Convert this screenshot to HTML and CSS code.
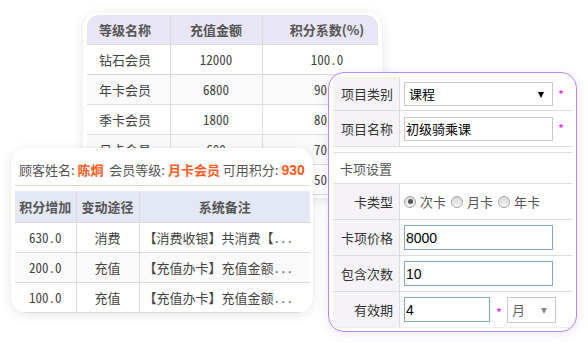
FILE: index.html
```html
<!DOCTYPE html>
<html lang="zh-CN">

<head>
  <meta charset="UTF-8">
  <meta name="viewport" content="width=device-width, initial-scale=1.0">
  <title>会员卡项</title>
  <link rel="stylesheet" href="styles.css">
</head>

<body>
  <div class="canvas">

    <!-- 会员等级 -->
    <div class="card card-levels">
      <div class="clip">
        <table class="grid levels">
          <colgroup>
            <col style="width: 83px">
            <col style="width: 92px">
            <col style="width: 130px">
          </colgroup>
          <thead>
            <tr>
              <th class="left">等级名称</th>
              <th>充值金额</th>
              <th>积分系数(%)</th>
            </tr>
          </thead>
          <tbody>
            <tr>
              <td class="left">钻石会员</td>
              <td>12000</td>
              <td>100.0</td>
            </tr>
            <tr>
              <td class="left">年卡会员</td>
              <td>6800</td>
              <td>90.0</td>
            </tr>
            <tr>
              <td class="left">季卡会员</td>
              <td>1800</td>
              <td>80.0</td>
            </tr>
            <tr>
              <td class="left">月卡会员</td>
              <td>600</td>
              <td>70.0</td>
            </tr>
            <tr>
              <td class="left">普通会员</td>
              <td>0</td>
              <td>50.0</td>
            </tr>
          </tbody>
        </table>
      </div>
    </div>

    <!-- 积分记录 -->
    <div class="card card-points">
      <div class="points-head">
        顾客姓名: <b class="hl">陈炯</b>&nbsp; 会员等级: <b class="hl">月卡会员</b> 可用积分: <b class="hl num">930</b>
      </div>
      <table class="grid points">
        <colgroup>
          <col style="width: 61px">
          <col style="width: 63px">
          <col style="width: 171px">
        </colgroup>
        <thead>
          <tr>
            <th>积分增加</th>
            <th>变动途径</th>
            <th>系统备注</th>
          </tr>
        </thead>
        <tbody>
          <tr>
            <td>630.0</td>
            <td>消费</td>
            <td class="note">【消费收银】共消费【...</td>
          </tr>
          <tr>
            <td>200.0</td>
            <td>充值</td>
            <td class="note">【充值办卡】充值金额...</td>
          </tr>
          <tr>
            <td>100.0</td>
            <td>充值</td>
            <td class="note">【充值办卡】充值金额...</td>
          </tr>
        </tbody>
      </table>
    </div>

    <!-- 卡项表单 -->
    <div class="card card-form">
      <div class="form-block">
        <div class="form-row first">
          <div class="form-label">项目类别</div>
          <div class="form-field">
            <div class="select wide"><span>课程</span><i class="arrow"></i></div>
            <span class="req">*</span>
          </div>
        </div>
        <div class="form-row">
          <div class="form-label">项目名称</div>
          <div class="form-field">
            <input class="text wide plain" type="text" value="初级骑乘课">
            <span class="req">*</span>
          </div>
        </div>
      </div>

      <div class="form-block second">
        <div class="form-row section">卡项设置</div>
        <div class="form-row">
          <div class="form-label">卡类型</div>
          <div class="form-field radios">
            <label class="radio"><span class="dot on"></span>次卡</label>
            <label class="radio"><span class="dot"></span>月卡</label>
            <label class="radio"><span class="dot"></span>年卡</label>
          </div>
        </div>
        <div class="form-row">
          <div class="form-label">卡项价格</div>
          <div class="form-field">
            <input class="text wide" type="text" value="8000">
          </div>
        </div>
        <div class="form-row">
          <div class="form-label">包含次数</div>
          <div class="form-field">
            <input class="text wide" type="text" value="10">
          </div>
        </div>
        <div class="form-row last">
          <div class="form-label">有效期</div>
          <div class="form-field">
            <input class="text short" type="text" value="4">
            <span class="req mid">*</span>
            <div class="select unit"><span>月</span><i class="arrow grey"></i></div>
          </div>
        </div>
      </div>
    </div>

  </div>
</body>

</html>
```

FILE: styles.css
```css
* {
  box-sizing: border-box;
}

body {
  margin: 0;
  background: #fff;
  font-family: "Noto Sans CJK SC", "Liberation Sans", sans-serif;
  font-size: 13px;
  color: #333;
}

.canvas {
  position: relative;
  width: 588px;
  height: 343px;
  overflow: hidden;
}

.card {
  position: absolute;
  background: #fff;
  border-radius: 16px;
  box-shadow: 0 2px 12px rgba(0, 0, 0, 0.1);
  overflow: hidden;
}

/* tables */

.grid {
  border-collapse: collapse;
  table-layout: fixed;
}

.grid th,
.grid td {
  padding: 0;
  text-align: center;
  white-space: nowrap;
  overflow: hidden;
  border-right: 1px solid #dcdcdc;
  border-bottom: 1px solid #dcdcdc;
}

.grid th {
  height: 30px;
  font-weight: bold;
  color: #555;
}

.grid td {
  height: 30px;
  color: #444;
  font-family: "Noto Sans Mono CJK SC", "Noto Sans CJK SC", "DejaVu Sans Mono", monospace;
}

.grid tbody tr:nth-child(even) td {
  background: #fafafa;
}

.grid .left {
  text-align: left;
  padding-left: 12px;
}

/* level card */

.card-levels {
  left: 83px;
  top: 12px;
  width: 299px;
  height: 186px;
  padding: 3px 4px;
}

.card-levels .clip {
  height: 100%;
  border-radius: 12px 12px 0 0;
  overflow: hidden;
}

.levels {
  width: 305px;
}

.levels th {
  height: 29px;
  background: #e8e5f4;
}

/* points card */

.card-points {
  left: 11px;
  top: 148px;
  width: 302px;
  height: 165px;
  padding: 0 3px 3px 4px;
}

.points-head {
  margin-top: 6px;
  height: 32px;
  line-height: 32px;
  padding-left: 4px;
  color: #555;
  border-bottom: 1px solid #dcdcdc;
  white-space: nowrap;
}

.points-head .hl {
  color: #ff5b22;
}

.points-head .num {
  font-family: "Liberation Sans", sans-serif;
  font-size: 14px;
}

.points {
  width: 295px;
  margin-top: 5px;
}

.points th {
  height: 31px;
  background: #e3e8f4;
}

.points td {
  height: 30px;
}

.points .note {
  text-align: left;
  padding-left: 4px;
  border-right: none;
}

.points th:last-child {
  border-right: none;
}

/* form card */

.card-form {
  left: 328px;
  top: 72px;
  width: 249px;
  height: 260px;
  padding: 4px;
  border: 1px solid #b48af2;
  box-shadow: 0 2px 12px rgba(120, 80, 200, 0.15);
}

.form-block.second {
  margin-top: 5px;
  border-top: 1px solid #dcdcdc;
}

.form-row {
  display: flex;
  height: 36px;
  border-bottom: 1px solid #dcdcdc;
}

.form-row.first {
  height: 34px;
}

.form-row.last {
  border-bottom-color: #eee;
}

.form-row.section {
  height: 31px;
  align-items: center;
  padding-left: 7px;
  color: #555;
}

.form-label {
  width: 67px;
  flex: none;
  background: #f5f3f8;
  border-right: 1px solid #dcdcdc;
  text-align: right;
  padding-right: 6px;
  display: flex;
  align-items: center;
  justify-content: flex-end;
  color: #333;
}

.form-field {
  display: flex;
  align-items: center;
  padding-left: 4px;
}

.text {
  height: 25px;
  margin: 0;
  padding: 0 1px;
  border: 1px solid #7fa6cf;
  font-family: "Liberation Sans", "Noto Sans CJK SC", sans-serif;
  font-size: 14px;
  color: #000;
  outline: none;
}

.text.plain {
  height: 24px;
  border-color: #c8c8c8;
  font-family: "Noto Sans CJK SC", sans-serif;
  font-size: 13px;
}

.wide {
  width: 149px;
}

.short {
  width: 86px;
}

.select {
  position: relative;
  height: 24px;
  border: 1px solid #c8c8c8;
  display: flex;
  align-items: center;
  padding-left: 4px;
  color: #000;
}

.select.unit {
  width: 49px;
  height: 26px;
  margin-left: 1px;
  color: #666;
}

.arrow {
  position: absolute;
  right: 8px;
  top: 50%;
  margin-top: -2px;
  border-left: 3px solid transparent;
  border-right: 3px solid transparent;
  border-top: 6px solid #000;
}

.arrow.grey {
  right: 8px;
  border-top-color: #888;
}

.req {
  margin-left: 5px;
  color: #e21ee6;
  font-size: 13px;
  align-self: flex-start;
  margin-top: 8px;
}

.req.mid {
  margin-left: 6px;
  margin-right: 4px;
  margin-top: 11px;
}

.radios {
  gap: 5px;
  color: #555;
}

.radio {
  display: flex;
  align-items: center;
  gap: 4px;
}

.dot {
  position: relative;
  width: 12px;
  height: 12px;
  border-radius: 50%;
  border: 1px solid #a4a4a4;
  background: linear-gradient(#d8d8d8, #f4f4f4);
}

.dot.on::after {
  content: "";
  position: absolute;
  left: 2.5px;
  top: 2.5px;
  width: 5px;
  height: 5px;
  border-radius: 50%;
  background: #555;
}
```
